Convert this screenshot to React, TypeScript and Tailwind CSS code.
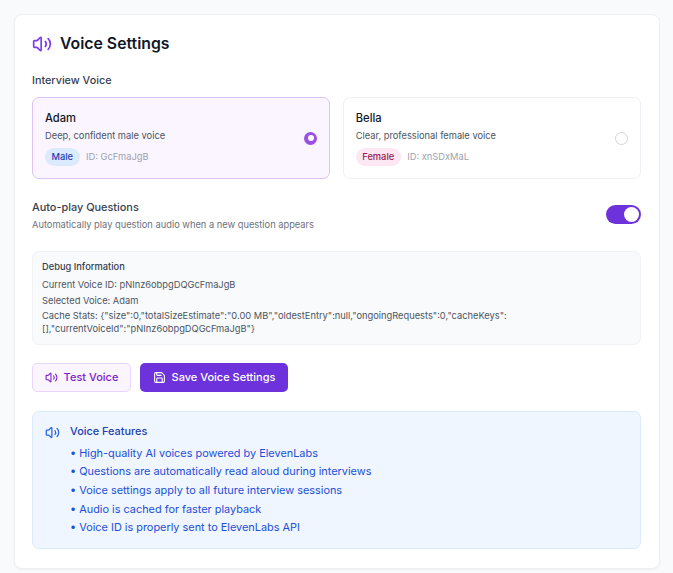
import { Volume2, Save } from "lucide-react";

const features = [
  "High-quality AI voices powered by ElevenLabs",
  "Questions are automatically read aloud during interviews",
  "Voice settings apply to all future interview sessions",
  "Audio is cached for faster playback",
  "Voice ID is properly sent to ElevenLabs API",
];

export default function App() {
  return (
    <div className="h-[573px] w-[673px] overflow-hidden bg-[#f9fafb] px-[13.5px] pt-[13.5px] font-['Inter',sans-serif]">
      <div className="h-[555px] rounded-[8px] border border-[#eef0f3] bg-white pl-[17.5px] pr-[18px] pt-[17px] shadow-[0_1px_2px_rgba(0,0,0,0.05)]">
        <div className="flex h-[24px] items-center">
          <Volume2 className="h-[20px] w-[20px] text-[#7c3aed]" strokeWidth={2} />
          <h2 className="ml-[8px] text-[15.8px] font-semibold leading-[24px] text-[#111827]">Voice Settings</h2>
        </div>
        <div className="mt-[17px] text-[10.8px] font-medium leading-[16px] text-[#374151]">Interview Voice</div>
        <div className="mt-[8.5px] grid grid-cols-2 gap-[13px]">
          <div className="flex h-[82px] items-center justify-between rounded-[7px] border border-[#dcc2f5] bg-[#faf5ff] pl-[12px] pr-[11.5px]">
            <div>
              <div className="text-[11.2px] font-medium leading-[17px] text-[#111827]">Adam</div>
              <div className="mt-[1px] text-[9.3px] leading-[15px] text-[#4b5563]">Deep, confident male voice</div>
              <div className="mt-[4.5px] flex items-center">
                <span className="rounded-full bg-[#dbeafe] px-[6.5px] py-[1.5px] text-[9.3px] font-medium leading-[15px] text-[#1e40af]">Male</span>
                <span className="ml-[6.5px] text-[9.3px] leading-[15px] text-[#9ca3af]">ID: GcFmaJgB</span>
              </div>
            </div>
            <div className="flex h-[13px] w-[13px] items-center justify-center rounded-full bg-[#9a4fe6]">
              <div className="h-[6px] w-[6px] rounded-full bg-white" />
            </div>
          </div>
          <div className="flex h-[82px] items-center justify-between rounded-[7px] border border-[#eff1f4] bg-white pl-[12px] pr-[11.5px]">
            <div>
              <div className="text-[11.2px] font-medium leading-[17px] text-[#111827]">Bella</div>
              <div className="mt-[1px] text-[9.3px] leading-[15px] text-[#4b5563]">Clear, professional female voice</div>
              <div className="mt-[4.5px] flex items-center">
                <span className="rounded-full bg-[#fce7f3] px-[6.5px] py-[1.5px] text-[9.3px] font-medium leading-[15px] text-[#9d174d]">Female</span>
                <span className="ml-[6.5px] text-[9.3px] leading-[15px] text-[#9ca3af]">ID: xnSDxMaL</span>
              </div>
            </div>
            <div className="h-[13px] w-[13px] rounded-full border border-[#d1d5db]" />
          </div>
        </div>
        <div className="mt-[20px] flex items-start justify-between">
          <div>
            <div className="text-[10.9px] font-medium leading-[17px] text-[#374151]">Auto-play Questions</div>
            <div className="mt-[1px] text-[9.3px] leading-[15px] text-[#6b7280]">Automatically play question audio when a new question appears</div>
          </div>
          <div className="mt-[6px] flex h-[18.5px] w-[34.5px] items-center justify-end rounded-full bg-[#6d32dc] pr-[2px]">
            <div className="h-[14.5px] w-[14.5px] rounded-full bg-white" />
          </div>
        </div>
        <div className="mt-[18.5px] rounded-[7px] border border-[#f0f2f5] bg-[#f9fafb] px-[9px] pb-[8.5px] pt-[7.5px]">
          <div className="text-[9.3px] font-medium leading-[15px] text-[#374151]">Debug Information</div>
          <div className="mt-[3px] text-[9.3px] leading-[15.5px] text-[#4b5563]">Current Voice ID: pNInz6obpgDQGcFmaJgB</div>
          <div className="text-[9.3px] leading-[15.5px] text-[#4b5563]">Selected Voice: Adam</div>
          <div className="pt-[2px] text-[9.3px] leading-[12.5px] text-[#4b5563]">
            {'Cache Stats: {"size":0,"totalSizeEstimate":"0.00 MB","oldestEntry":null,"ongoingRequests":0,"cacheKeys":'}
            <br />
            {'[],"currentVoiceId":"pNInz6obpgDQGcFmaJgB"}'}
          </div>
        </div>
        <div className="mt-[18.5px] flex gap-[9px]">
          <button className="flex h-[29px] w-[99px] items-center justify-center gap-[6px] rounded-[5px] border border-[#e9d5ff] bg-[#faf5ff] text-[11px] font-medium text-[#7e22ce]">
            <Volume2 className="h-[13px] w-[13px]" strokeWidth={2} />
            Test Voice
          </button>
          <button className="flex h-[29px] w-[148px] items-center justify-center gap-[6px] rounded-[5px] bg-[#6d32dc] text-[11px] font-medium text-white">
            <Save className="h-[13px] w-[13px]" strokeWidth={2} />
            Save Voice Settings
          </button>
        </div>
        <div className="mt-[18.5px] flex h-[138px] rounded-[7px] border border-[#dbeafe] bg-[#eff6ff] pl-[12px] pt-[11.5px]">
          <Volume2 className="mt-[2px] h-[15px] w-[15px] shrink-0 text-[#2563eb]" strokeWidth={2} />
          <div className="ml-[10px]">
            <div className="text-[10.9px] font-medium leading-[17px] text-[#1e40af]">Voice Features</div>
            <ul className="mt-[3.5px] text-[10.9px] leading-[18.7px] text-[#1d4ed8]">
              {features.map((f) => (
                <li key={f}>• {f}</li>
              ))}
            </ul>
          </div>
        </div>
      </div>
    </div>
  );
}
